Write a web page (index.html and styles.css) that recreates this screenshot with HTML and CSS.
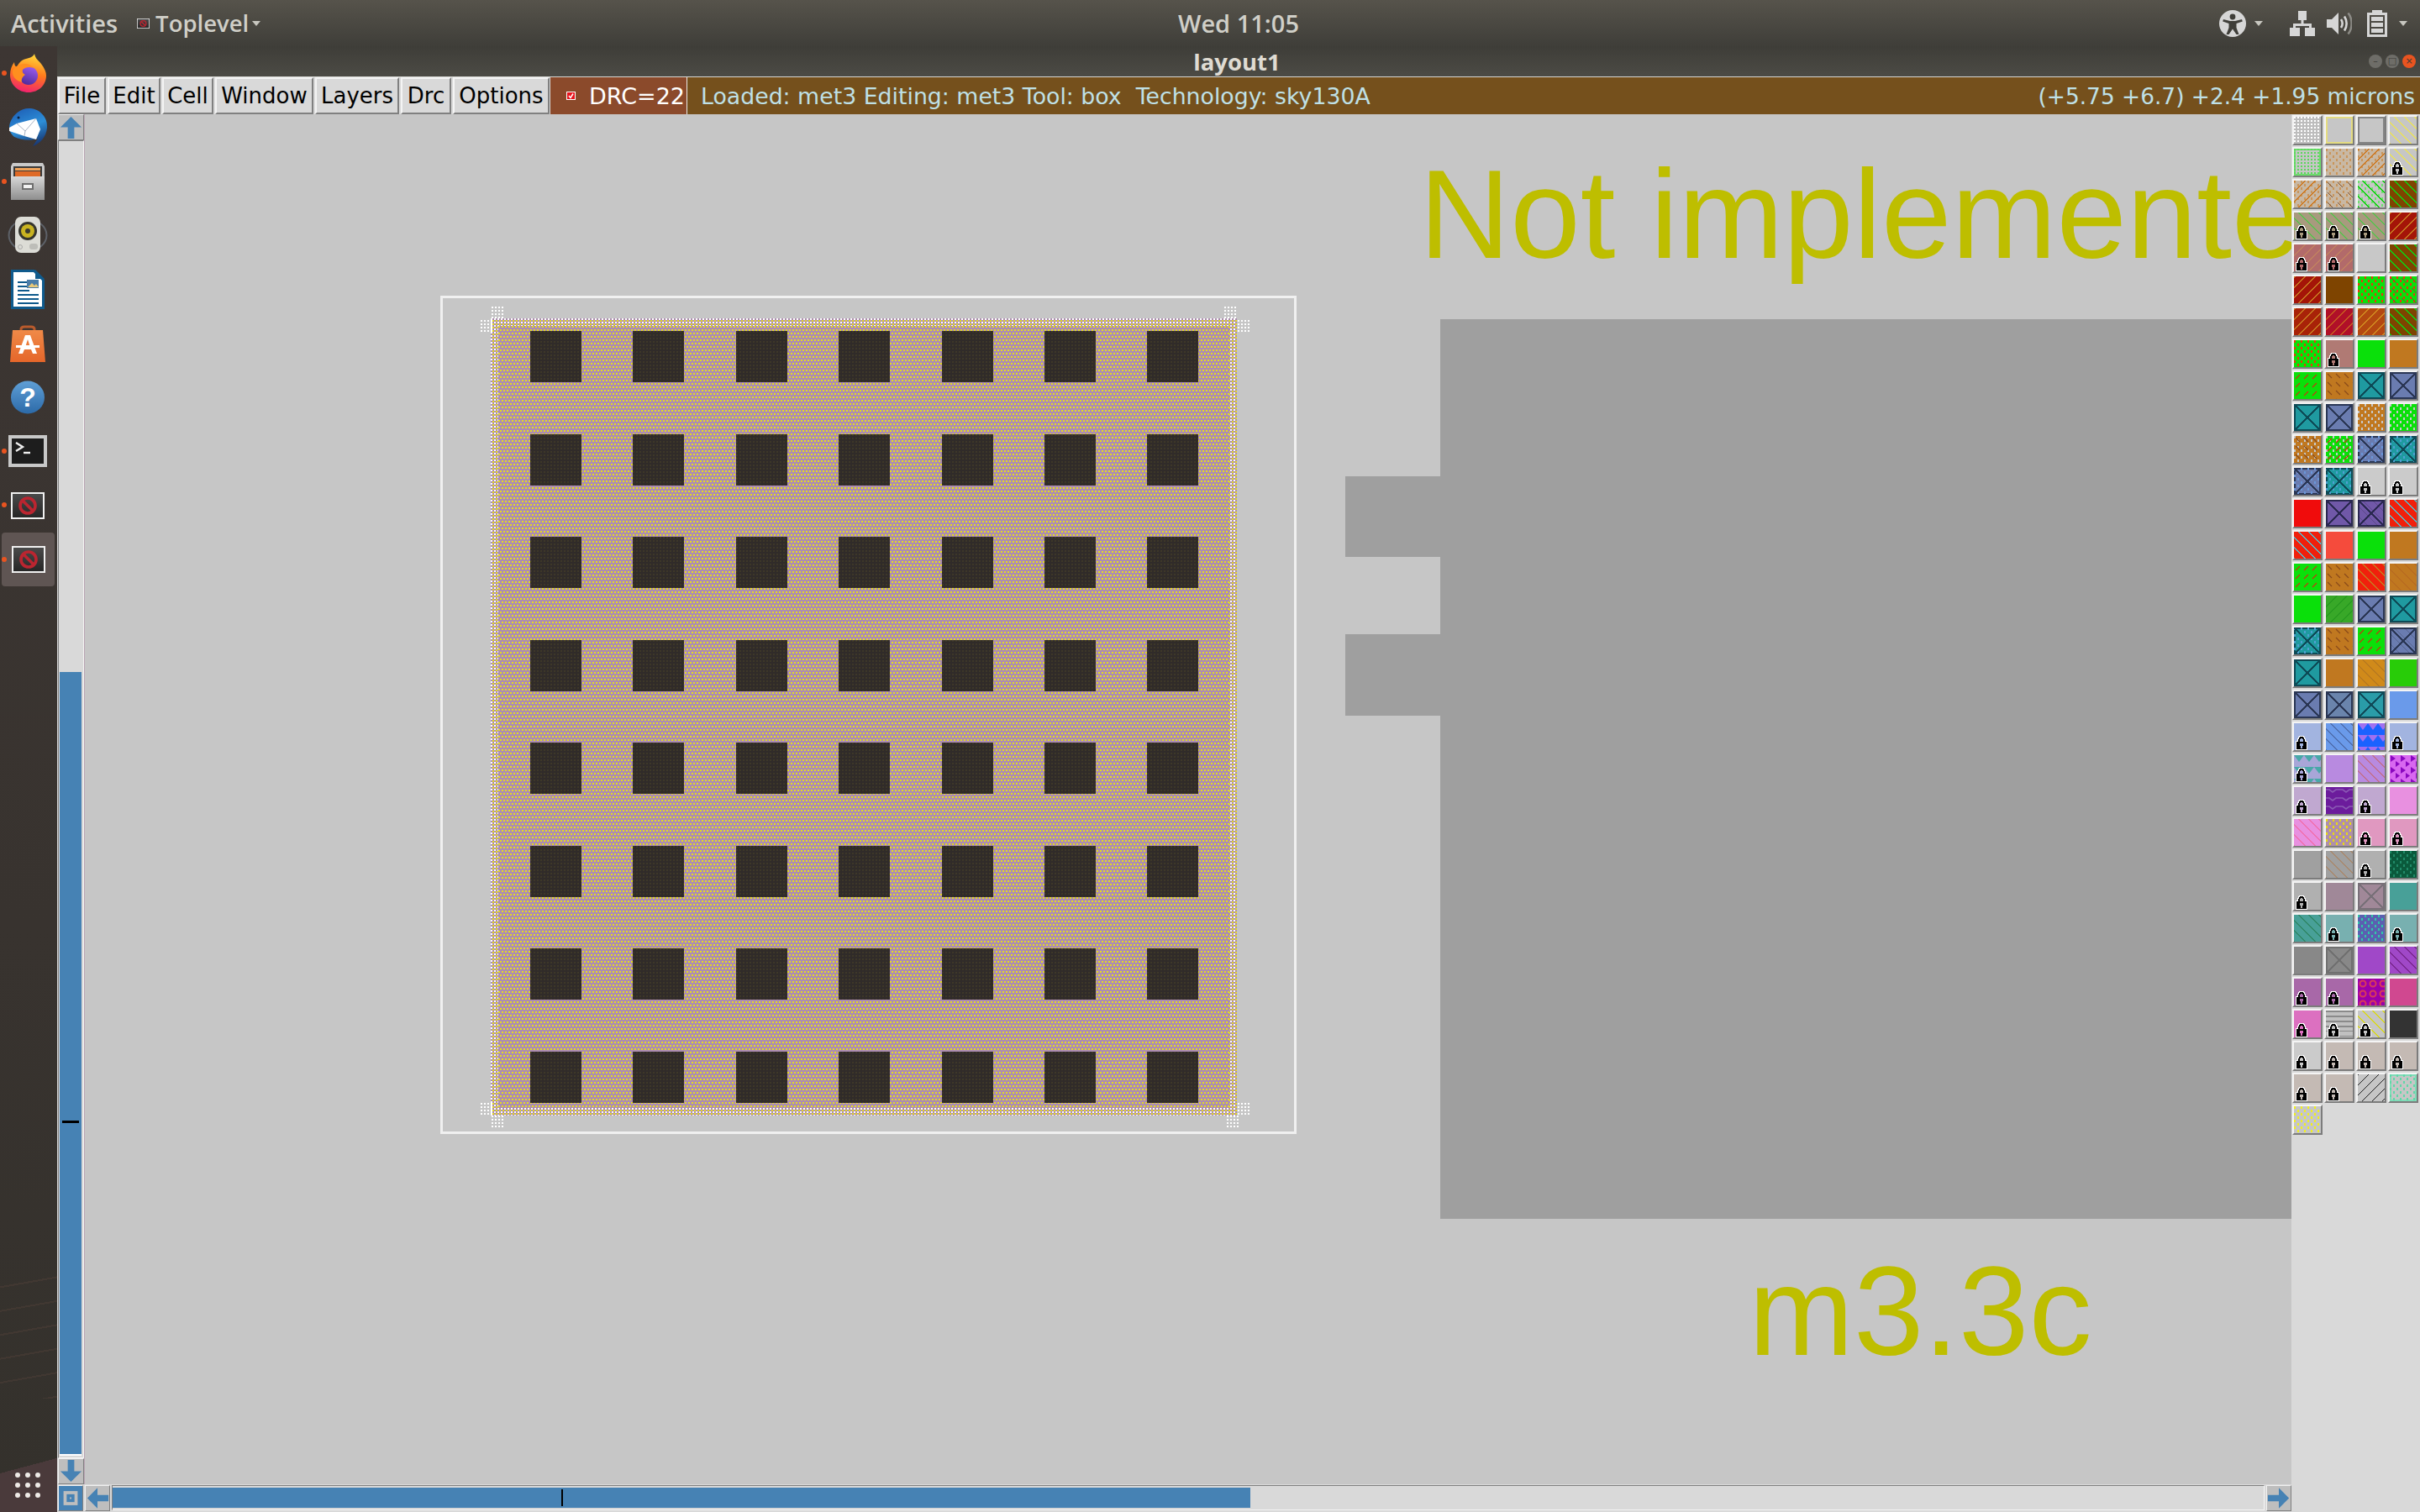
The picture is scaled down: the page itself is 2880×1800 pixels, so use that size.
FILE: index.html
```html
<!DOCTYPE html>
<html lang="en">
<head>
  <meta charset="UTF-8">
  <title>layout1</title>
  <link rel="stylesheet" href="styles.css">
</head>
<body>
  <svg class="defs" width="0" height="0">
    <defs>
      <symbol id="lock" viewBox="0 0 14 17">
        <path fill="#fff" d="M4 0h6v1h1v2h1v3h2v11H0V6h2V3h1V1h1z"/>
        <path fill="#000" d="M5 1h4v1h1v2h1v3h2v9H1V7h2V4h1V2h1z"/>
        <path class="lock-tint" d="M6 3h2v1h1v3H5V4h1zM5 9h4v3H8v3H6v-3H5z"/>
      </symbol>
      <symbol id="arrow" viewBox="0 0 30 30">
        <path fill="#4682b4" d="M15 2l13 13h-9v14h-8V15H2z"/>
      </symbol>
      <symbol id="magic" viewBox="0 0 40 32">
        <rect width="40" height="32" fill="#f0f0f0"/>
        <rect x="2" y="2" width="36" height="28" fill="url(#slate)"/>
        <circle cx="20" cy="16" r="9" fill="none" stroke="#bb2530" stroke-width="3.600"/>
        <path d="M14 10l12 12" stroke="#bb2530" stroke-width="3.600"/>
      </symbol>
      <linearGradient id="slate" x1="0" y1="0" x2="0" y2="1">
        <stop offset="0" stop-color="#4a4a4a"/>
        <stop offset="1" stop-color="#262626"/>
      </linearGradient>
      <linearGradient id="fox" x1="0.6" y1="0" x2="0.4" y2="1">
        <stop offset="0" stop-color="#ffd93b"/>
        <stop offset="0.5" stop-color="#ff7a1c"/>
        <stop offset="1" stop-color="#f2206f"/>
      </linearGradient>
      <linearGradient id="ball" x1="0.7" y1="0" x2="0.3" y2="1">
        <stop offset="0" stop-color="#9a5cf0"/>
        <stop offset="1" stop-color="#4e2a98"/>
      </linearGradient>
      <linearGradient id="bird" x1="0.3" y1="0" x2="0.7" y2="1">
        <stop offset="0" stop-color="#1f62b8"/>
        <stop offset="0.5" stop-color="#2d8fd8"/>
        <stop offset="1" stop-color="#17336e"/>
      </linearGradient>
      <linearGradient id="steel" x1="0" y1="0" x2="0" y2="1">
        <stop offset="0" stop-color="#d8d8d8"/>
        <stop offset="1" stop-color="#8e8e8e"/>
      </linearGradient>
      <linearGradient id="globe" x1="0" y1="0" x2="0" y2="1">
        <stop offset="0" stop-color="#5f9fd6"/>
        <stop offset="1" stop-color="#2c6aa8"/>
      </linearGradient>
      <linearGradient id="bag" x1="0" y1="0" x2="0" y2="1">
        <stop offset="0" stop-color="#f08a48"/>
        <stop offset="1" stop-color="#e5662a"/>
      </linearGradient>
    </defs>
  </svg>

  <header class="topbar">
    <span class="top-label activities">Activities</span>
    <svg class="top-app-icon" viewBox="0 0 40 32"><use href="#magic"/></svg>
    <span class="top-label app-name">Toplevel</span>
    <i class="caret"></i>
    <span class="top-label clock">Wed 11:05</span>
    <div class="tray">
      <svg class="tray-a11y" viewBox="0 0 32 32">
        <circle cx="16" cy="16" r="16" fill="#d6d6d6"/>
        <circle cx="16" cy="8" r="3.400" fill="#3f3e39"/>
        <path fill="#3f3e39" d="M5 11l8 2h6l8-2 .8 2.400-7.300 2.600v5l3 8h-3L16 22.500 11.500 29h-3l3-8v-5l-7.300-2.600z"/>
      </svg>
      <i class="caret"></i>
      <svg class="tray-net" viewBox="0 0 30 30">
        <path fill="#d6d6d6" d="M10 0h10v11h-3.500v4H26v5h4v10H18V20h5v-2H7v2h5v10H0V20h4v-5h9.500v-4H10z"/>
      </svg>
      <svg class="tray-vol" viewBox="0 0 30 28">
        <path fill="#d6d6d6" d="M0 9h6l8-8v26l-8-8H0z"/>
        <path fill="none" stroke="#d6d6d6" stroke-width="2.600" d="M17 9c2 3 2 7 0 10"/>
        <path fill="none" stroke="#d6d6d6" stroke-width="2.600" d="M21 5.500c3.500 5 3.500 12 0 17"/>
        <path fill="none" stroke="#8b8a85" stroke-width="2.600" d="M25.500 1.500c5.500 7 5.500 18 0 25"/>
      </svg>
      <svg class="tray-bat" viewBox="0 0 24 32">
        <path fill="#d6d6d6" d="M6 0h12v3h6v29H0V3h6zM3 6v23h18V6z"/>
        <path fill="#d6d6d6" d="M5 8h14v5H5zM5 15h14v5H5zM5 22h14v5H5z"/>
      </svg>
      <i class="caret"></i>
    </div>
  </header>

  <div class="main">
    <nav class="dock">
      <div class="dock-item running">
        <svg class="ic-fox" viewBox="0 0 44 46">
          <path fill="url(#fox)" d="M30 0c1 6 5 8 8 12 4 5 6 10 6 14 0 11-9 20-21 20S1 37 1 25c0-6 2-11 5-15 0 3 1 5 3 6 2-5 6-9 11-10 5-1 9-3 10-6z"/>
          <circle cx="23" cy="26" r="11" fill="url(#ball)"/>
          <path fill="#ff8f1f" d="M4 20c3-5 8-8 14-8 5 0 9 2 11 5-5-2-10-1-13 2-1 3 1 5 3 6-3 2-5 5-4 9C8 32 3 27 4 20z"/>
        </svg>
      </div>
      <div class="dock-item">
        <svg class="ic-bird" viewBox="0 0 48 47">
          <path fill="url(#bird)" d="M3 18C7 7 17 0 27 1c12 1 21 11 20 23-1 11-8 19-17 22l6-9c-8 3-20 2-28-2C2 30 1 24 3 18z"/>
          <path fill="#fff" d="M2 24L11 19l23-6 5 13-5 12-14-4-18-6z"/>
          <path fill="none" stroke="#a9b4c4" stroke-width="1" d="M11 19l10 9 13-15M20 34l1-6"/>
          <circle cx="13" cy="12" r="1.500" fill="#0b2140"/>
        </svg>
      </div>
      <div class="dock-item running">
        <svg class="ic-files" viewBox="0 0 40 44">
          <path fill="#c9c9c9" d="M2 0h36l2 4v40H0V4z"/>
          <rect x="3" y="4" width="34" height="12" fill="#3a3a3a"/>
          <rect x="5" y="6" width="30" height="3" fill="#f0a35a"/>
          <rect x="5" y="10" width="30" height="6" fill="#df6a26"/>
          <rect y="16" width="40" height="28" fill="url(#steel)"/>
          <rect x="13" y="24" width="14" height="8" fill="#6e6e6e"/>
          <rect x="15" y="26" width="10" height="4" fill="#f1f1f1"/>
        </svg>
      </div>
      <div class="dock-item">
        <svg class="ic-rhythm" viewBox="0 0 48 44">
          <path fill="none" stroke="#5d6168" stroke-width="2" d="M9 8c-10 8-10 20 0 28M39 8c10 8 10 20 0 28"/>
          <rect x="9" y="0" width="30" height="43" rx="7" fill="#dcdcd6"/>
          <circle cx="24" cy="17" r="11" fill="#35352e"/>
          <circle cx="24" cy="17" r="8" fill="#c8b321"/>
          <circle cx="24" cy="17" r="3" fill="#3a3a30"/>
          <circle cx="15" cy="36" r="2.500" fill="none" stroke="#aaa"/>
          <rect x="26" y="32" width="10" height="7" rx="3" fill="#bdbdb8"/>
        </svg>
      </div>
      <div class="dock-item">
        <svg class="ic-writer" viewBox="0 0 40 47">
          <path fill="#0f5a8c" d="M0 0h28l12 12v35H0z"/>
          <path fill="#fff" d="M3 3h24l10 10v31H3z"/>
          <path fill="#0f5a8c" d="M29 0l11 11H29z"/>
          <path fill="#0f5a8c" d="M8 14h14v2H8zM8 19h14v2H8zM8 24h14v2H8zM8 29h25v2H8zM8 34h25v2H8zM8 39h25v2H8z"/>
          <rect x="19" y="12" width="14" height="10" fill="#4c7da8"/>
          <path fill="#e8c878" d="M20 21l5-5 3 3 2-2 3 4z"/>
        </svg>
      </div>
      <div class="dock-item">
        <svg class="ic-bag" viewBox="0 0 42 44">
          <path fill="none" stroke="#b85a2c" stroke-width="3" d="M13 12V5c0-2 2-3 4-3h8c2 0 4 1 4 3v7"/>
          <path fill="url(#bag)" d="M3 6h36l3 38H0z"/>
          <path fill="#fff" d="M18 12h6l8 22h-5l-2-5h-8l-2 5h-5zM21 17l-2.500 8h5z"/>
          <rect x="7" y="24" width="28" height="3" fill="#fff"/>
        </svg>
      </div>
      <div class="dock-item">
        <svg class="ic-help" viewBox="0 0 40 40">
          <ellipse cx="20" cy="20" rx="20" ry="19.500" fill="url(#globe)"/>
          <text x="20" y="31" class="help-mark">?</text>
        </svg>
      </div>
      <div class="dock-item running">
        <svg class="ic-term" viewBox="0 0 46 38">
          <rect width="46" height="38" fill="#c8c8c8"/>
          <rect x="4" y="4" width="38" height="30" fill="#1d1d1d"/>
          <path fill="none" stroke="#eee" stroke-width="2.400" d="M9 9l8 5-8 5"/>
          <path stroke="#eee" stroke-width="2.400" d="M18 21h8"/>
        </svg>
      </div>
      <div class="dock-item running">
        <svg class="ic-magic" viewBox="0 0 40 32"><use href="#magic"/></svg>
      </div>
      <div class="dock-item running active">
        <svg class="ic-magic" viewBox="0 0 40 32"><use href="#magic"/></svg>
      </div>
      <div class="apps-grid">
        <i></i><i></i><i></i><i></i><i></i><i></i><i></i><i></i><i></i>
      </div>
    </nav>

    <div class="window">
      <div class="titlebar">
        <span class="title">layout1</span>
        <div class="win-buttons">
          <i class="win-btn">&#8211;</i>
          <i class="win-btn">&#9633;</i>
          <i class="win-btn close">&#215;</i>
        </div>
      </div>

      <div class="menubar">
        <button class="menu-btn btn-file">File</button>
        <button class="menu-btn btn-edit">Edit</button>
        <button class="menu-btn btn-cell">Cell</button>
        <button class="menu-btn btn-window">Window</button>
        <button class="menu-btn btn-layers">Layers</button>
        <button class="menu-btn btn-drc">Drc</button>
        <button class="menu-btn btn-options">Options</button>
        <div class="drc-status">
          <svg class="drc-check" viewBox="0 0 11 10">
            <rect width="11" height="10" fill="#fff"/>
            <rect x="1" y="1" width="9" height="8" fill="#e8141c"/>
            <path fill="none" stroke="#fff" stroke-width="1.500" d="M3 5l2 2.500L8 2.500"/>
          </svg>
          <span>DRC=22</span>
        </div>
        <div class="message">
          <span class="msg-text">Loaded: met3 Editing: met3 Tool: box  Technology: sky130A</span>
          <span class="msg-coords">(+5.75 +6.7) +2.4 +1.95 microns</span>
        </div>
      </div>

      <div class="workarea">
        <div class="view">
          <div class="viewrow">
            <div class="vscroll">
              <button class="scroll-btn"><svg><use href="#arrow"/></svg></button>
              <div class="vtrack">
                <div class="vthumb"><i class="vtick"></i></div>
              </div>
              <button class="scroll-btn down"><svg><use href="#arrow"/></svg></button>
            </div>

            <div class="canvas">
              <div class="cell-box"></div>
              <div class="met3">
                <div class="met3-core">
                  <i></i><i></i><i></i><i></i><i></i><i></i><i></i>
                  <i></i><i></i><i></i><i></i><i></i><i></i><i></i>
                  <i></i><i></i><i></i><i></i><i></i><i></i><i></i>
                  <i></i><i></i><i></i><i></i><i></i><i></i><i></i>
                  <i></i><i></i><i></i><i></i><i></i><i></i><i></i>
                  <i></i><i></i><i></i><i></i><i></i><i></i><i></i>
                  <i></i><i></i><i></i><i></i><i></i><i></i><i></i>
                  <i></i><i></i><i></i><i></i><i></i><i></i><i></i>
                </div>
              </div>
              <i class="hash tl-a"></i><i class="hash tl-b"></i>
              <i class="hash tr-a"></i><i class="hash tr-b"></i>
              <i class="hash bl-a"></i><i class="hash bl-b"></i>
              <i class="hash br-a"></i><i class="hash br-b"></i>
              <div class="shape body"></div>
              <div class="shape tab-a"></div>
              <div class="shape tab-b"></div>
              <span class="drc-label not-impl">Not implemented</span>
              <span class="drc-label rule">m3.3c</span>
            </div>
          </div>

          <div class="hscroll">
            <button class="scroll-btn corner">
              <svg viewBox="0 0 30 30">
                <rect x="6" y="6" width="18" height="18" fill="#bebebe"/>
                <rect x="10" y="10" width="10" height="10" fill="#4682b4"/>
                <rect x="14" y="14" width="2" height="2" fill="#bebebe"/>
              </svg>
            </button>
            <button class="scroll-btn left"><svg><use href="#arrow"/></svg></button>
            <div class="htrack">
              <div class="hthumb"><i class="htick"></i></div>
            </div>
            <button class="scroll-btn right"><svg><use href="#arrow"/></svg></button>
          </div>
        </div>

        <aside class="palette">
          <!-- 1 -->
          <i class="tile dots white"></i>
          <i class="tile frame yframe"></i>
          <i class="tile frame gframe"></i>
          <i class="tile bs yhatch"></i>
          <!-- 2 -->
          <i class="tile dots frame greend"></i>
          <i class="tile sdots tand"></i>
          <i class="tile fs thick sdots tanhatch"></i>
          <i class="tile bs yhatch"><svg class="lock"><use href="#lock"/></svg></i>
          <!-- 3 -->
          <i class="tile fs thick sdots tanhatch"></i>
          <i class="tile sdots dash-tan tand"></i>
          <i class="tile bs thick sdots greenhatch"></i>
          <i class="tile bs thick brgreen"></i>
          <!-- 4 -->
          <i class="tile bs sage"><svg class="lock"><use href="#lock"/></svg></i>
          <i class="tile bs sage"><svg class="lock"><use href="#lock"/></svg></i>
          <i class="tile bs sage"><svg class="lock"><use href="#lock"/></svg></i>
          <i class="tile fs thick redor"></i>
          <!-- 5 -->
          <i class="tile fs rose"><svg class="lock"><use href="#lock"/></svg></i>
          <i class="tile fs rose"><svg class="lock"><use href="#lock"/></svg></i>
          <i class="tile gray"></i>
          <i class="tile bs thick brgreen"></i>
          <!-- 6 -->
          <i class="tile fs thick redor"></i>
          <i class="tile brown"></i>
          <i class="tile sdots grred"></i>
          <i class="tile sdots dash-tan grred"></i>
          <!-- 7 -->
          <i class="tile fs thick rust"></i>
          <i class="tile fs thick crimson"></i>
          <i class="tile fs thick burnt"></i>
          <i class="tile bs thick brgreen"></i>
          <!-- 8 -->
          <i class="tile sdots grred"></i>
          <i class="tile rosy"><svg class="lock"><use href="#lock"/></svg></i>
          <i class="tile green"></i>
          <i class="tile orange"></i>
          <!-- 9 -->
          <i class="tile dash-red green"></i>
          <i class="tile dash-brown orange"></i>
          <i class="tile cross teal"></i>
          <i class="tile cross blue"></i>
          <!-- 10 -->
          <i class="tile cross teal"></i>
          <i class="tile cross blue"></i>
          <i class="tile sdots orgray"></i>
          <i class="tile sdots grgray"></i>
          <!-- 11 -->
          <i class="tile sdots dash-brown orgray"></i>
          <i class="tile sdots dash-red grgray"></i>
          <i class="tile cross sdots blue"></i>
          <i class="tile cross sdots teal"></i>
          <!-- 12 -->
          <i class="tile cross sdots blue"></i>
          <i class="tile cross sdots teal"></i>
          <i class="tile lgray"><svg class="lock"><use href="#lock"/></svg></i>
          <i class="tile lgray"><svg class="lock"><use href="#lock"/></svg></i>
          <!-- 13 -->
          <i class="tile red"></i>
          <i class="tile cross purple"></i>
          <i class="tile cross bs purple"></i>
          <i class="tile bs redcy"></i>
          <!-- 14 -->
          <i class="tile bs redcy"></i>
          <i class="tile lred"></i>
          <i class="tile green"></i>
          <i class="tile orange"></i>
          <!-- 15 -->
          <i class="tile dash-red green"></i>
          <i class="tile dash-brown orange"></i>
          <i class="tile bs redor2"></i>
          <i class="tile bs orfaint"></i>
          <!-- 16 -->
          <i class="tile green"></i>
          <i class="tile fs dgreen"></i>
          <i class="tile cross blue"></i>
          <i class="tile cross teal"></i>
          <!-- 17 -->
          <i class="tile cross sdots teal"></i>
          <i class="tile dash-brown orange"></i>
          <i class="tile dash-red green"></i>
          <i class="tile cross bs blue"></i>
          <!-- 18 -->
          <i class="tile cross teal"></i>
          <i class="tile orange"></i>
          <i class="tile bs gold"></i>
          <i class="tile lime"></i>
          <!-- 19 -->
          <i class="tile cross blue"></i>
          <i class="tile cross slate"></i>
          <i class="tile cross teal2"></i>
          <i class="tile sky"></i>
          <!-- 20 -->
          <i class="tile pblue"><svg class="lock"><use href="#lock"/></svg></i>
          <i class="tile bs sky"></i>
          <i class="tile tri-royal"></i>
          <i class="tile pblue"><svg class="lock"><use href="#lock"/></svg></i>
          <!-- 21 -->
          <i class="tile tri-teal"><svg class="lock"><use href="#lock"/></svg></i>
          <i class="tile lav"></i>
          <i class="tile bs lav"></i>
          <i class="tile tri-magenta"></i>
          <!-- 22 -->
          <i class="tile lilac"><svg class="lock"><use href="#lock"/></svg></i>
          <i class="tile wave-purple"></i>
          <i class="tile lilac"><svg class="lock"><use href="#lock"/></svg></i>
          <i class="tile pink"></i>
          <!-- 23 -->
          <i class="tile bs pink"></i>
          <i class="tile sdots mauvey"></i>
          <i class="tile rosep"><svg class="lock"><use href="#lock"/></svg></i>
          <i class="tile rosep"><svg class="lock"><use href="#lock"/></svg></i>
          <!-- 24 -->
          <i class="tile g-a0"></i>
          <i class="tile bs g-a0 tanline"></i>
          <i class="tile g-b0"><svg class="lock"><use href="#lock"/></svg></i>
          <i class="tile sdots dgr"></i>
          <!-- 25 -->
          <i class="tile g-b0"><svg class="lock"><use href="#lock"/></svg></i>
          <i class="tile mauve"></i>
          <i class="tile cross mauve"></i>
          <i class="tile seag"></i>
          <!-- 26 -->
          <i class="tile bs seag"></i>
          <i class="tile ptealb"><svg class="lock"><use href="#lock"/></svg></i>
          <i class="tile sdots bpur"></i>
          <i class="tile ptealb"><svg class="lock"><use href="#lock"/></svg></i>
          <!-- 27 -->
          <i class="tile g-88"></i>
          <i class="tile cross g-88"></i>
          <i class="tile vio"></i>
          <i class="tile bs vio"></i>
          <!-- 28 -->
          <i class="tile orchid"><svg class="lock"><use href="#lock"/></svg></i>
          <i class="tile orchid"><svg class="lock"><use href="#lock"/></svg></i>
          <i class="tile rings"></i>
          <i class="tile dpink"></i>
          <!-- 29 -->
          <i class="tile hotp"><svg class="lock"><use href="#lock"/></svg></i>
          <i class="tile hlines"><svg class="lock"><use href="#lock"/></svg></i>
          <i class="tile bs ystrong"><svg class="lock"><use href="#lock"/></svg></i>
          <i class="tile dark"></i>
          <!-- 30 -->
          <i class="tile lgray"><svg class="lock"><use href="#lock"/></svg></i>
          <i class="tile beige"><svg class="lock"><use href="#lock"/></svg></i>
          <i class="tile beige"><svg class="lock"><use href="#lock"/></svg></i>
          <i class="tile beige"><svg class="lock"><use href="#lock"/></svg></i>
          <!-- 31 -->
          <i class="tile beige"><svg class="lock"><use href="#lock"/></svg></i>
          <i class="tile beige"><svg class="lock"><use href="#lock"/></svg></i>
          <i class="tile fs black"></i>
          <i class="tile sdots frame mint"></i>
          <!-- 32 -->
          <i class="tile sdots yellow"></i>
        </aside>
      </div>
    </div>
  </div>
</body>
</html>
```

FILE: styles.css
```css
* {
  box-sizing: border-box;
}

html, body {
  margin: 0;
  width: 2880px;
  height: 1800px;
  overflow: hidden;
}

body {
  display: flex;
  flex-direction: column;
  font-family: "DejaVu Sans", sans-serif;
  background-color: #d9d9d9;
}

i {
  display: block;
  font-style: normal;
}

.defs {
  position: absolute;
}

/* gnome top bar */
.topbar {
  height: 55px;
  display: flex;
  align-items: center;
  position: relative;
  padding-left: 13px;
  background: linear-gradient(#56534b, #3f3e39);
}

.top-label {
  font-family: "Open Sans", sans-serif;
  font-size: 29px;
  font-weight: 600;
  color: #d0cfc8;
}

.activities {
  margin-right: 23px;
}

.app-name {
  font-size: 27.5px;
}

.top-app-icon {
  width: 15px;
  height: 12px;
  margin-right: 7px;
}

.caret {
  width: 0;
  height: 0;
  margin-left: 4px;
  border: 5px solid transparent;
  border-top: 6px solid #c8c7c0;
  border-bottom: 0;
}

.clock {
  position: absolute;
  left: 1402px;
}

.tray {
  margin-left: auto;
  display: flex;
  align-items: center;
  padding-right: 15px;
}

.tray-a11y {
  width: 32px;
  height: 32px;
}

.tray .caret {
  margin-left: 10px;
}

.tray-net {
  width: 30px;
  height: 30px;
  margin-left: 32px;
}

.tray-vol {
  width: 30px;
  height: 28px;
  margin-left: 14px;
}

.tray-bat {
  width: 24px;
  height: 32px;
  margin-left: 18px;
}

.tray-bat + .caret {
  margin-left: 14px;
}

.main {
  flex: 1;
  display: flex;
  min-height: 0;
}

/* ubuntu dock */
.dock {
  width: 68px;
  display: flex;
  flex-direction: column;
  background:
    linear-gradient(345deg, #4a3a3b 0, #4a3a3b 62px, transparent 62px),
    repeating-linear-gradient(170deg, transparent 0 26px, rgba(96, 72, 62, 0.28) 26px 28px) 0 1450px / 100% 160px no-repeat,
    linear-gradient(#3d3633, #38332f 60%, #34312c);
}

.dock-item {
  height: 64.3px;
  display: flex;
  align-items: center;
  justify-content: center;
  padding-right: 2px;
  position: relative;
  flex-shrink: 0;
}

.dock-item.running::before {
  content: "";
  position: absolute;
  left: 2px;
  top: 29px;
  width: 6px;
  height: 6px;
  border-radius: 50%;
  background-color: #e95420;
}

.dock-item.active {
  margin: 0 3px 0 2px;
  padding-right: 0;
  border-radius: 4px;
  background-color: #5f5553;
}

.dock-item.active::before {
  left: 0;
}

.ic-fox { width: 44px; height: 46px; }
.ic-bird { width: 48px; height: 47px; }
.ic-files { width: 40px; height: 44px; }
.ic-rhythm { width: 48px; height: 44px; }
.ic-writer { width: 40px; height: 47px; }
.ic-bag { width: 42px; height: 44px; }
.ic-help { width: 40px; height: 40px; }
.ic-term { width: 46px; height: 38px; }
.ic-magic { width: 40px; height: 32px; }

.help-mark {
  font-family: "Liberation Sans", sans-serif;
  font-size: 32px;
  font-weight: bold;
  text-anchor: middle;
  fill: #fff;
}

.apps-grid {
  margin: auto 0 17px 18px;
  display: grid;
  grid-template-columns: repeat(3, 6px);
  gap: 6px;
}

.apps-grid i {
  height: 6px;
  border-radius: 50%;
  background-color: #eeeae6;
}

/* magic window */
.window {
  flex: 1;
  display: flex;
  flex-direction: column;
  min-width: 0;
}

.titlebar {
  height: 37px;
  position: relative;
  display: flex;
  justify-content: center;
  align-items: center;
  background: linear-gradient(#3e3d38, #4c4b45);
  border-bottom: 1px solid #d8d8d4;
}

.title {
  font-family: "Open Sans", sans-serif;
  font-size: 27.5px;
  font-weight: 700;
  color: #dfdbd2;
  margin-right: 4px;
}

.win-buttons {
  position: absolute;
  right: 5px;
  top: 10px;
  display: flex;
  gap: 4px;
}

.win-btn {
  width: 16px;
  height: 16px;
  border-radius: 50%;
  background-color: #6e6d68;
  color: #3c3b37;
  font-size: 11px;
  line-height: 16px;
  text-align: center;
}

.win-btn.close {
  background-color: #e95420;
}

.menubar {
  height: 44px;
  display: flex;
  padding-left: 1px;
  background-color: #d9d9d9;
  font-size: 26px;
}

.menu-btn {
  height: 44px;
  padding: 0;
  margin-right: 2px;
  font: inherit;
  color: #000;
  background-color: #d9d9d9;
  border: 2px solid;
  border-color: #f4f4f4 #808080 #808080 #f4f4f4;
}

.btn-file { width: 57px; }
.btn-edit { width: 63px; }
.btn-cell { width: 61px; }
.btn-window { width: 117px; }
.btn-layers { width: 100px; }
.btn-drc { width: 60px; }
.btn-options { width: 115px; margin-right: 1px; }

.drc-status {
  width: 163px;
  display: flex;
  align-items: center;
  padding-left: 19px;
  gap: 16px;
  font-size: 27px;
  color: #fff;
  background-color: #8b4a2b;
  border-right: 1px solid #e8e8e8;
}

.drc-check {
  width: 11px;
  height: 10px;
}

.message {
  flex: 1;
  display: flex;
  justify-content: space-between;
  align-items: center;
  padding: 0 6px 0 16px;
  font-size: 26.75px;
  color: #bfe0e6;
  background-color: #75501c;
}

.msg-text {
  white-space: pre;
}

.msg-coords {
  font-size: 26.4px;
}

.workarea {
  flex: 1;
  display: flex;
  min-height: 0;
}

.view {
  flex: 1;
  display: flex;
  flex-direction: column;
  min-width: 0;
}

.viewrow {
  flex: 1;
  display: flex;
  min-height: 0;
}

/* scrollbars */
.vscroll {
  width: 32px;
  display: flex;
  flex-direction: column;
  padding-left: 1px;
  background-color: #d9d9d9;
}

.scroll-btn {
  flex: none;
  width: 31px;
  height: 31px;
  padding: 0;
  display: block;
  background-color: #bebebe;
  border: 1px solid;
  border-color: #f0f0f0 #808080 #808080 #f0f0f0;
}

.scroll-btn svg {
  display: block;
  width: 29px;
  height: 29px;
}

.scroll-btn.down svg { transform: rotate(180deg); }
.scroll-btn.left svg { transform: rotate(-90deg); }
.scroll-btn.right svg { transform: rotate(90deg); }

.vtrack {
  flex: 1;
  display: flex;
  flex-direction: column;
  justify-content: flex-end;
  width: 31px;
  padding: 1px 2px 2px 1px;
  border: 1px solid;
  border-color: #808080 #f4f4f4 #f4f4f4 #808080;
}

.vthumb {
  height: 933px;
  position: relative;
  background-color: #4682b4;
  border-bottom: 2px solid #fff;
}

.vtick {
  position: absolute;
  left: 3px;
  right: 3px;
  top: 534px;
  height: 3px;
  background-color: #000;
}

.canvas {
  flex: 1;
  position: relative;
  overflow: hidden;
  background-color: #c6c6c6;
  border-left: 1px solid #b9a5b3;
}

.cell-box {
  position: absolute;
  left: 423px;
  top: 216px;
  width: 1019px;
  height: 998px;
  border: 3px solid #f0f0f0;
}

.met3 {
  position: absolute;
  left: 483px;
  top: 243px;
  width: 888px;
  height: 949px;
  padding: 9px;
  background:
    conic-gradient(at 2px 2px, transparent 75%, #fff 0) 0 0 / 4px 4px,
    conic-gradient(at 2px 2px, transparent 75%, #e4dc20 0) 2px 2px / 4px 4px,
    #ac8cb2;
}

.met3-core {
  height: 100%;
  padding: 6px 0 0 38px;
  display: grid;
  grid-template-columns: repeat(7, 61px);
  grid-auto-rows: 61px;
  column-gap: 61.4px;
  row-gap: 61.5px;
  background:
    conic-gradient(at 2px 2px, transparent 75%, #e4dc20 0) 0 0 / 4px 8px,
    conic-gradient(at 2px 2px, transparent 75%, #e4dc20 0) 2px 4px / 4px 8px,
    #ac8cb2;
}

.met3-core i {
  background:
    conic-gradient(at 2px 2px, transparent 75%, rgba(232, 220, 32, 0.07) 0) 0 0 / 4px 4px,
    #302b29;
}

.hash {
  position: absolute;
  width: 14px;
  height: 14px;
  background: conic-gradient(at 2px 2px, transparent 75%, #fff 0) 0 0 / 4px 4px;
}

.tl-a { left: 484px; top: 229px; }
.tl-b { left: 471px; top: 245px; }
.tr-a { left: 1356px; top: 229px; }
.tr-b { left: 1372px; top: 245px; }
.bl-a { left: 471px; top: 1177px; }
.bl-b { left: 484px; top: 1192px; }
.br-a { left: 1372px; top: 1177px; }
.br-b { left: 1359px; top: 1192px; }

.shape {
  position: absolute;
  background-color: #9f9f9f;
}

.body { left: 1613px; top: 244px; width: 1020px; height: 1071px; }
.tab-a { left: 1500px; top: 431px; width: 113px; height: 96px; }
.tab-b { left: 1500px; top: 619px; width: 113px; height: 97px; }

.drc-label {
  position: absolute;
  font-family: "Liberation Sans", sans-serif;
  font-size: 150px;
  line-height: 1;
  color: #bebe00;
  white-space: nowrap;
}

.not-impl { left: 1588px; top: 44px; }
.rule { left: 1980px; top: 1350px; }

.hscroll {
  height: 33px;
  display: flex;
  gap: 2px;
  padding: 1px 0 2px 1px;
  background-color: #d9d9d9;
}

.hscroll .scroll-btn {
  width: 30px;
}

.hscroll .scroll-btn svg {
  width: 28px;
}

.scroll-btn.corner {
  background-color: #4682b4;
}

.htrack {
  flex: 1;
  padding: 2px 3px 2px 0;
  border: 1px solid;
  border-color: #808080 #f4f4f4 #f4f4f4 #808080;
}

.hthumb {
  width: 1354px;
  height: 100%;
  position: relative;
  background-color: #4682b4;
}

.htick {
  position: absolute;
  left: 534px;
  top: 2px;
  bottom: 2px;
  width: 2px;
  background-color: #000;
}

/* layer palette */
.palette {
  width: 153px;
  padding: 1px 0 0 1px;
  display: grid;
  grid-template-columns: repeat(4, 36px);
  grid-auto-rows: 36px;
  gap: 2px;
  align-content: start;
  background-color: #d9d9d9;
}

.tile {
  --f: #c6c6c6;
  --h: #808080;
  --d: #fff;
  --w: 1.4px;
  position: relative;
  overflow: hidden;
  background-color: var(--f);
  border: 2px solid;
  border-color: #f4f4f4 #7c7c7c #7c7c7c #f4f4f4;
}

.tile::before,
.tile::after {
  content: "";
  position: absolute;
  inset: 0;
}

.lock {
  position: absolute;
  z-index: 1;
  left: 2px;
  bottom: 0;
  width: 14px;
  height: 17px;
}

.lock-tint {
  fill: var(--f);
}

/* tile patterns */
.thick { --w: 2px; }

.tile.fs::after {
  background: repeating-linear-gradient(135deg, var(--h) 0 var(--w), transparent var(--w) 8.5px);
}

.tile.bs::after {
  background: repeating-linear-gradient(45deg, var(--h) 0 var(--w), transparent var(--w) 8.5px);
}

.tile.dots::before {
  background: conic-gradient(at 2px 2px, transparent 75%, var(--d) 0) 0 0 / 4px 4px;
}

.tile.sdots::before {
  background:
    conic-gradient(at 2.5px 2.5px, transparent 75%, var(--d) 0) 0 0 / 8px 8px,
    conic-gradient(at 2.5px 2.5px, transparent 75%, var(--d) 0) 4px 4px / 8px 8px;
}

.tile.cross {
  box-shadow: inset 0 0 0 2px var(--h);
}

.tile.cross::after {
  background:
    linear-gradient(45deg, transparent calc(50% - 1px), var(--h) 0 calc(50% + 1px), transparent 0),
    linear-gradient(135deg, transparent calc(50% - 1px), var(--h) 0 calc(50% + 1px), transparent 0);
}

.tile.cross.bs::after {
  background:
    linear-gradient(45deg, transparent calc(50% - 1px), var(--h) 0 calc(50% + 1px), transparent 0),
    linear-gradient(135deg, transparent calc(50% - 1px), var(--h) 0 calc(50% + 1px), transparent 0),
    repeating-linear-gradient(45deg, rgba(0, 0, 0, 0.18) 0 1px, transparent 1px 8.5px);
}

.tile.frame {
  box-shadow: inset 0 0 0 2px var(--h);
}

.tile.dash-red::after {
  background: url("data:image/svg+xml,%3Csvg xmlns='http://www.w3.org/2000/svg' width='10' height='10'%3E%3Cpath d='M2 8l5-5' stroke='%23c03a10' stroke-width='1.300'/%3E%3C/svg%3E") 0 0 / 10px 10px;
}

.tile.dash-brown::after {
  background: url("data:image/svg+xml,%3Csvg xmlns='http://www.w3.org/2000/svg' width='10' height='10'%3E%3Cpath d='M2 2l5 5' stroke='%238a4a1a' stroke-width='1.300'/%3E%3C/svg%3E") 0 0 / 10px 10px;
}

.tile.dash-tan::after {
  background: url("data:image/svg+xml,%3Csvg xmlns='http://www.w3.org/2000/svg' width='12' height='12'%3E%3Cpath d='M2 2l6 6' stroke='%237a5030' stroke-width='1'/%3E%3C/svg%3E") 0 0 / 12px 12px;
}

.tri-royal {
  --f: #1a62ff;
  background-image: url("data:image/svg+xml,%3Csvg xmlns='http://www.w3.org/2000/svg' width='12' height='14'%3E%3Cpath d='M0 0h12L6 8z' fill='%23a070f0'/%3E%3C/svg%3E");
}

.tri-teal {
  --f: #a8a6d8;
  background-image: url("data:image/svg+xml,%3Csvg xmlns='http://www.w3.org/2000/svg' width='12' height='14'%3E%3Cpath d='M0 0h12L6 8z' fill='%2348a8a8'/%3E%3C/svg%3E");
}

.tri-magenta {
  --f: #d868f0;
  background-image: url("data:image/svg+xml,%3Csvg xmlns='http://www.w3.org/2000/svg' width='12' height='14'%3E%3Cpath d='M1 0l6 4-6 4zM7 7l5 3.500L7 14z' fill='%238a08c0'/%3E%3C/svg%3E");
}

.wave-purple {
  --f: #6c1c9c;
  background-image: url("data:image/svg+xml,%3Csvg xmlns='http://www.w3.org/2000/svg' width='16' height='10'%3E%3Cpath d='M0 3h4l4 3 4-3h4' fill='none' stroke='%238a58b4' stroke-width='1.600'/%3E%3C/svg%3E");
}

.rings {
  --f: #9c00a8;
  background-image: url("data:image/svg+xml,%3Csvg xmlns='http://www.w3.org/2000/svg' width='12' height='12'%3E%3Ccircle cx='6' cy='6' r='3.500' fill='none' stroke='%23d83a58' stroke-width='2'/%3E%3C/svg%3E");
}

/* tile colours */
.white { --f: #bdbdbd; --d: #fff; }
.yframe { --h: #e4dc80; }
.gframe { --h: #848484; }
.yhatch { --h: #e8e060; }
.greend { --f: #c6c6c6; --d: #5cd85c; --h: #6cdc6c; }
.tand { --f: #c8b8a4; --d: #c9955a; }
.tanhatch { --f: #c8b8a4; --h: #cd7a24; --d: #c9955a; }
.greenhatch { --f: #c6c6c6; --h: #10d010; --d: #70e070; }
.brgreen { --f: #7e4400; --h: #10d010; }
.sage { --f: #a89a7e; --h: #5cc050; }
.redor { --f: #a41408; --h: #c87a20; }
.rose { --f: #b26a6a; --h: #c08060; }
.gray { --f: #c8c8c8; }
.brown { --f: #7e4400; }
.grred { --f: #0ae00a; --d: #e83410; }
.rust { --f: #a82208; --h: #c87a20; }
.crimson { --f: #b01028; --h: #c85a20; }
.burnt { --f: #b44810; --h: #d08a20; }
.rosy { --f: #b07a74; }
.green { --f: #0ae00a; }
.orange { --f: #c07820; }
.teal { --f: #1f9aa0; --h: #0d4a56; --d: #4fa0d0; }
.blue { --f: #6a7cb0; --h: #2a3654; --d: #6a96d8; }
.orgray { --f: #c07820; --d: #c8c8c8; }
.grgray { --f: #0ae00a; --d: #c8c8c8; }
.lgray { --f: #cbcbcb; }
.red { --f: #f00c0c; }
.purple { --f: #7058a8; --h: #2a2850; }
.redcy { --f: #f0200c; --h: #58b8c8; }
.lred { --f: #f54b3c; }
.redor2 { --f: #f0200c; --h: #c87820; }
.orfaint { --f: #c07820; --h: #b86c20; }
.dgreen { --f: #38a828; --h: #289a20; }
.gold { --f: #d08a1a; --h: #b87a20; }
.lime { --f: #28cc08; }
.slate { --f: #6a84ac; --h: #2a3654; }
.teal2 { --f: #2a9ca8; --h: #104a58; }
.sky { --f: #6a9aea; --h: #5070b0; }
.pblue { --f: #a2b4e0; }
.lav { --f: #b88ae0; --h: #c07090; }
.lilac { --f: #c0a8d0; }
.pink { --f: #e890e0; --h: #f070b0; }
.mauvey { --f: #b090a8; --d: #e8dc10; }
.rosep { --f: #e098c0; }
.g-a0 { --f: #a0a0a0; }
.tanline { --h: #a88a70; }
.g-b0 { --f: #b0b0b0; }
.dgr { --f: #0a5a3c; --d: #208a68; }
.mauve { --f: #a08898; --h: #787078; }
.seag { --f: #48a098; --h: #308868; }
.ptealb { --f: #78b0b0; }
.bpur { --f: #5a60b0; --d: #30c8a8; }
.g-88 { --f: #888; --h: #707070; }
.vio { --f: #a048c8; --h: #7a2890; }
.orchid { --f: #a868a8; }
.dpink { --f: #d04890; }
.hotp { --f: #dc70c0; }
.hlines {
  --f: #c0c0c0;
  background-image: repeating-linear-gradient(#8a8a8a 0 1.5px, transparent 1.5px 6px);
}
.ystrong { --h: #d8d820; }
.dark { --f: #333; }
.beige { --f: #c4bab4; }
.black { --h: #222; --w: 1.2px; }
.mint { --f: #c6c6c6; --d: #60d8a8; --h: #80dcb8; }
.yellow { --f: #c6c6c6; --d: #f0f020; }
```
